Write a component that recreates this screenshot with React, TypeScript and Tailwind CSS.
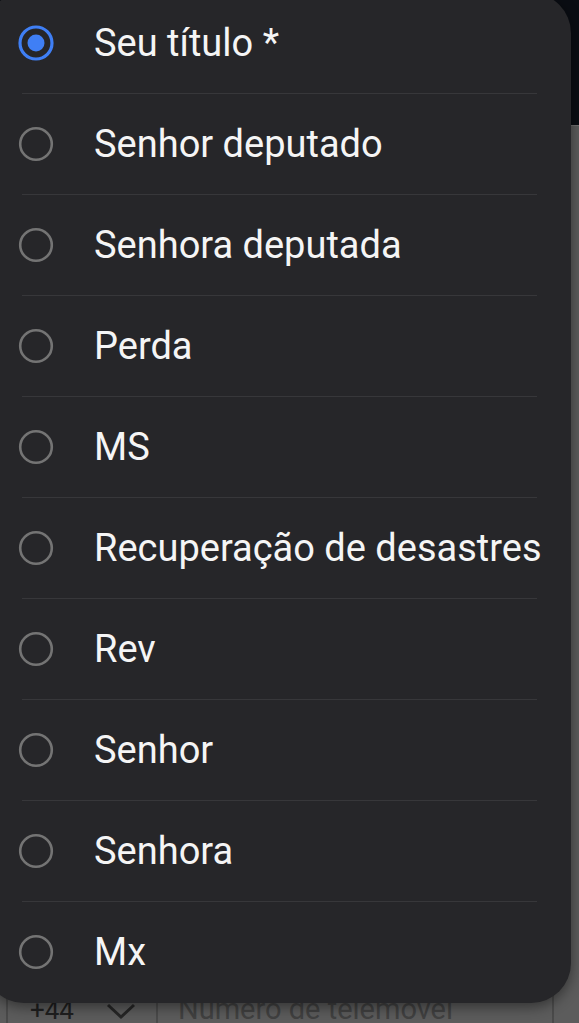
import { useState } from 'react'

const options = [
  'Seu título *',
  'Senhor deputado',
  'Senhora deputada',
  'Perda',
  'MS',
  'Recuperação de desastres',
  'Rev',
  'Senhor',
  'Senhora',
  'Mx',
]

function Radio({ checked }: { checked: boolean }) {
  if (checked) {
    return (
      <svg width="38" height="38" viewBox="0 0 38 38" className="shrink-0">
        <circle cx="19" cy="19" r="16" fill="none" stroke="#3f7ff5" strokeWidth="3.2" />
        <circle cx="19" cy="19" r="8.5" fill="#3f7ff5" />
      </svg>
    )
  }
  return (
    <svg width="38" height="38" viewBox="0 0 38 38" className="shrink-0">
      <circle cx="19" cy="19" r="15.8" fill="none" stroke="#747474" strokeWidth="2.6" />
    </svg>
  )
}

export default function App() {
  const [selected, setSelected] = useState(0)

  return (
    <div
      className="relative flex h-[1023px] w-[579px] flex-col overflow-hidden bg-[#5c5c5c]"
      style={{ fontFamily: 'Roboto, "Noto Sans", sans-serif' }}
    >
      {/* page behind the dimmed overlay */}
      <div className="h-[125px] bg-[#0a0d13]" />
      <div className="h-px bg-[#707070]" />
      <div className="mt-auto mb-[-22px] ml-[6px] flex h-[70px] w-[548px] items-center border-x-2 border-[#4a4a4a]">
        <span className="ml-[22px] text-[26px] text-[#1f1f1f]">+44</span>
        <svg width="30" height="18" viewBox="0 0 30 18" className="ml-[32px] mt-[2px]">
          <path d="M2 3 L15 15 L28 3" fill="none" stroke="#262626" strokeWidth="3" />
        </svg>
        <div className="ml-[20px] h-full w-[2px] bg-[#4a4a4a]" />
        <span className="ml-[20px] text-[29px] text-[#414141]">Número de telemóvel</span>
      </div>

      {/* menu */}
      <div className="absolute left-[-16px] top-[-7px] w-[587px] overflow-hidden rounded-[40px] bg-[#262629] shadow-[0_4px_14px_rgba(0,0,0,0.45)]">
        {options.map((label, i) => (
          <div key={label}>
            <button
              onClick={() => setSelected(i)}
              className="flex h-[100px] w-full items-center pl-[33px] text-left"
            >
              <Radio checked={selected === i} />
              <span className="ml-[39px] text-[38px] leading-none text-[#f5f5f5]">{label}</span>
            </button>
            {i < options.length - 1 ? (
              <div className="ml-[38px] mr-[34px] h-px bg-[#37373a]" />
            ) : (
              <div className="h-px" />
            )}
          </div>
        ))}
      </div>
    </div>
  )
}
